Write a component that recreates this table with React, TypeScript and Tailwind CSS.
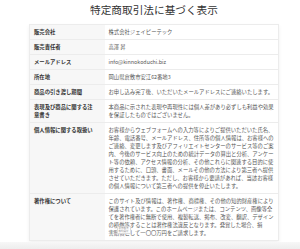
const rows: { label: string; lines: string[] }[] = [
  { label: '販売会社', lines: ['株式会社ジェイピーテック'] },
  { label: '販売責任者', lines: ['高澤 昇'] },
  { label: 'メールアドレス', lines: ['info@kinnokoduchi.biz'] },
  { label: '所在地', lines: ['岡山県倉敷市安江62番地3'] },
  { label: '商品の引き渡し期間', lines: ['お申し込み完了後、いただいたメールアドレスにご連絡いたします。'] },
  {
    label: '表現及び商品に関する注意書き',
    lines: ['本商品に示された表現や再現性には個人差があり必ずしも利益や効果', 'を保証したものではございません。'],
  },
  {
    label: '個人情報に関する取扱い',
    lines: [
      'お客様からウェブフォームへの入力等によりご提供いただいた氏名、',
      '年齢、電話番号、メールアドレス、住所等の個人情報は、お客様への',
      'ご連絡、変更します及びアフィリエイトセンターのサービス等のご案',
      '内、今後のサービス向上のための統計データの算出と分析、アンケー',
      'ト等の依頼、アクセス情報の分析、その他これらに関連する目的に使',
      '用するために、口頭、書面、メールその他の方法により第三者へ提供',
      'させていただきます。ただし、お客様から要請があれば、当該お客様',
      'の個人情報について第三者への提供を停止いたします。',
    ],
  },
  {
    label: '著作権について',
    lines: [
      'このサイト及び情報は、著作権、商標権、その他の知的財産権により',
      '保護されています。このホームページまたは、コンテンツ、画像等全',
      'てを著作権者に無断で使用、複製転送、掲布、改変、翻訳、デザイン',
      'の模倣等することは著作権法違反となります。発覚した場合、損',
      '害賠償として一〇〇万円をご請求します。',
    ],
  },
];

export default function App() {
  return (
    <div
      className="w-[300px] h-[249px] overflow-hidden bg-white text-[#333]"
      style={{ fontFamily: '"Noto Sans CJK JP", "Liberation Sans", sans-serif' }}
    >
      <div className="ml-[29px] w-[250px]">
        <h1 className="pt-[2px] text-center text-[10.67px] leading-[16px] font-normal text-[#333]">
          特定商取引法に基づく表示
        </h1>

        <table className="mt-[6px] w-full border-collapse border border-[#ececec] shadow-[0_2px_4px_rgba(0,0,0,0.06)] text-[5.33px] leading-[8px]">
          <tbody>
            {rows.map((row) => (
              <tr key={row.label} className="border-b border-[#ececec] align-top">
                <th className="w-[75px] bg-[#f7f7f7] px-[4px] py-[3px] text-left font-bold text-[#333]">
                  {row.label === '表現及び商品に関する注意書き' ? (
                    <>
                      表現及び商品に関する注
                      <br />
                      意書き
                    </>
                  ) : (
                    row.label
                  )}
                </th>
                <td className="relative bg-white px-[4px] py-[3px] text-[#555]">
                  {row.lines.map((line, i) => (
                    <div key={i} className="whitespace-nowrap">
                      {line}
                    </div>
                  ))}
                  {row.label === '著作権について' && (
                    <div className="absolute left-[12px] top-[32px] flex flex-col items-center border border-[#ddd] bg-white px-[1px] text-[2.5px] leading-[3px] text-[#888] shadow-[0_0_1px_rgba(0,0,0,0.1)]">
                      <span>著作権法</span>
                      <span>権利侵害</span>
                    </div>
                  )}
                </td>
              </tr>
            ))}
          </tbody>
        </table>
      </div>
      <div className="mt-[1px] h-[8px] w-full bg-gradient-to-b from-[#f7f7f7] to-[#ececec]" />
    </div>
  );
}
